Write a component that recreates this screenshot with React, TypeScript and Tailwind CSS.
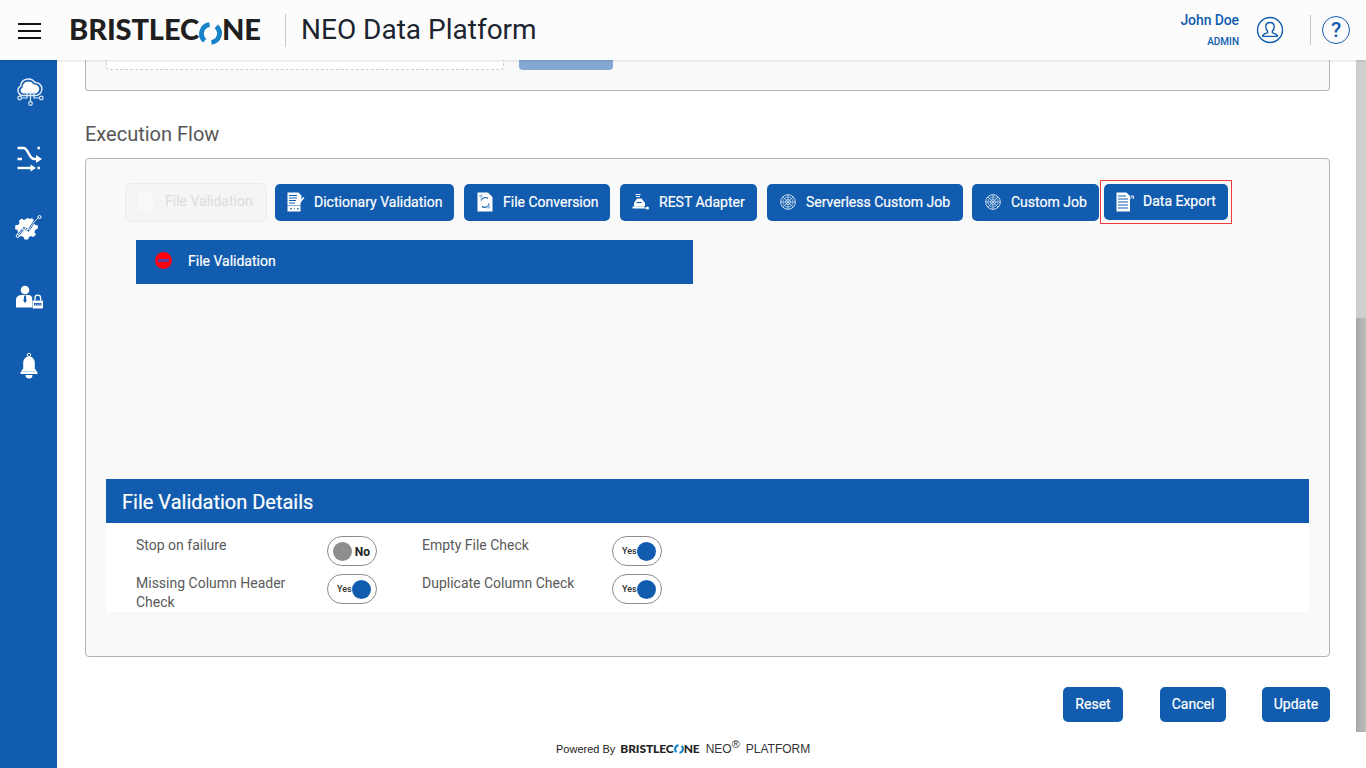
import React from "react";

const roboto = "font-['Roboto',sans-serif]";

function LogoO({ size }: { size: number }) {
  return (
    <svg width={size} height={size} viewBox="0 0 24 24" className="inline-block shrink-0" fill="none">
      <path d="M11 2.800A9.500 9.500 0 0 0 6 19.500" stroke="#1683c9" strokeWidth="5" />
      <path d="M13 21.200A9.500 9.500 0 0 0 18 4.500" stroke="#1683c9" strokeWidth="5" />
    </svg>
  );
}

function Logo() {
  return (
    <div className="ml-[-1px] flex items-center text-[#1f1f1f] font-['Lato',sans-serif] font-black text-[29px] leading-none tracking-[-0.1px] w-[193px] pb-[3px]">
      <span>BRISTLEC</span>
      <span className="pt-[2px]"><LogoO size={23} /></span>
      <span>NE</span>
    </div>
  );
}

function CloudIcon() {
  return (
    <svg width="30" height="30" viewBox="0 0 30 30" fill="none" stroke="#dfe9f5" strokeWidth="1.200">
      <path d="M9 19.500a5 5 0 0 1-2.500-9.300A8 8 0 0 1 21 6.500a6.500 6.500 0 0 1 .8 13z" strokeWidth="1.500" />
      <path d="M9.500 17.500a3 3 0 0 1-1-5.800A6 6 0 0 1 19.700 8.500a4.500 4.500 0 0 1 1.800 9z" fill="#fff" stroke="none" />
      <path d="M16.500 15v10.500M13 15v7H7.500M20 15v7h5.500" />
      <circle cx="5.700" cy="22" r="1.800" />
      <circle cx="27.300" cy="22" r="1.800" />
      <circle cx="16.500" cy="27.500" r="1.800" />
    </svg>
  );
}

function ShuffleIcon() {
  return (
    <svg width="28" height="26" viewBox="0 0 28 26" fill="none" stroke="#fff" strokeWidth="2.400">
      <path d="M2.500 2h6c5 0 5 11 11 11h3" />
      <path d="M21 9l6 4-6 4z" fill="#fff" stroke="none" />
      <path d="M2.500 22h14" />
      <path d="M15.500 18.500l5.500 3.500-5.500 3.500z" fill="#fff" stroke="none" />
      <path d="M2.500 13h4.500M22.500 2h2.400M22.500 22h2.400" />
    </svg>
  );
}

function GearIcon() {
  return (
    <svg width="28" height="28" viewBox="0 0 28 28" fill="none">
      <path d="M12 4l3.500 1 1.500-1 2 2.500-.5 2.500 2 2 2.500.5-.5 3.500-2.500 1-.5 2.500 1.500 2-2.500 2.500-2.500-1-2 1-1 2.500h-3.500l-1-2.500-2.500-1-2.500 1-2-2.500 1.500-2-.5-2.500-2.500-1 .5-4 2.500 0 1.500-2-.5-2.500 3-2 1.500 1.500 2-.5z" fill="#fff" />
      <path d="M2.500 22L9 14l4.500 2.500L19 8l5-5" stroke="#1a5fae" strokeWidth="2.200" />
      <path d="M2.500 22L9 14l4.500 2.500L19 8l5-5" stroke="#dfe9f5" strokeWidth="0.900" />
      <circle cx="2.700" cy="22" r="1.500" fill="#1a5fae" stroke="#fff" />
      <circle cx="9" cy="14" r="1.500" fill="#1a5fae" stroke="#fff" />
      <circle cx="13.500" cy="16.500" r="1.500" fill="#1a5fae" stroke="#fff" />
      <circle cx="24.500" cy="3" r="1.500" fill="#1a5fae" stroke="#fff" />
    </svg>
  );
}

function UserLockIcon() {
  return (
    <svg width="28" height="26" viewBox="0 0 28 26" fill="none">
      <circle cx="10" cy="5" r="4.300" fill="#fff" />
      <path d="M1 22.500v-8c0-2.500 2-4 5-4.500h8c2 .5 3 1.500 3.200 3v9.500z" fill="#fff" />
      <path d="M9.200 10.500h1.600l.7 5.500-1.500 2-1.500-2z" fill="#115cae" />
      <rect x="17.500" y="15.500" width="10.500" height="8" rx="0.800" fill="#fff" />
      <path d="M20 15.500v-2.500a2.800 2.800 0 0 1 5.600 0v2.500" stroke="#fff" strokeWidth="1.300" />
      <rect x="19" y="18" width="7.500" height="2.400" fill="#115cae" />
      <path d="M20 19.200h1M22.300 19.200h1M24.500 19.200h1" stroke="#fff" strokeWidth="0.900" />
    </svg>
  );
}

function BellIcon() {
  return (
    <svg width="20" height="28" viewBox="0 0 20 28" fill="none">
      <circle cx="10" cy="3" r="1.700" stroke="#fff" strokeWidth="1" />
      <path d="M10 4.500c-3.800 0-5.800 3-5.800 6.500v5.500L1.500 20.500v1.500h17v-1.500l-2.700-4V11c0-3.500-2-6.500-5.800-6.500z" fill="#fff" />
      <path d="M3 19.500h14" stroke="#c9d9ee" strokeWidth="1.200" />
      <path d="M6.500 23h7a3.500 3.500 0 0 1-7 0z" fill="#fff" />
    </svg>
  );
}

function FormIcon() {
  return (
    <svg width="18" height="20" viewBox="0 0 18 20" fill="none">
      <path d="M0.500 0.500h11l3 3v6l-1 1v3h-13z" fill="#fff" />
      <path d="M2 3.500h8M2 6h8M2 8.500h7M2 11h6" stroke="#115cae" strokeWidth="1" />
      <path d="M10.500 8.500l2 2 4.500-5" stroke="#fff" strokeWidth="1.300" />
      <rect x="0.500" y="14" width="13" height="5.500" fill="#fff" />
      <path d="M3 16.800h2M7 16.800h1M10 16.800h2" stroke="#115cae" strokeWidth="1" />
    </svg>
  );
}

function ConvertIcon() {
  return (
    <svg width="16" height="20" viewBox="0 0 16 20" fill="none">
      <path d="M0.500 0.500h10.500l4.500 4.500v14.500h-15z" fill="#fff" />
      <path d="M4 8.500a4.500 4.500 0 0 1 7-2M12 11.500a4.500 4.500 0 0 1-7 3" stroke="#115cae" strokeWidth="1.100" />
      <rect x="2.500" y="2.500" width="3" height="3" fill="#9fbfe2" />
      <rect x="10" y="13" width="3" height="3.500" fill="#9fbfe2" />
    </svg>
  );
}

function RestIcon() {
  return (
    <svg width="18" height="18" viewBox="0 0 18 18" fill="none">
      <path d="M3.500 1.500h5M4 3.500h4" stroke="#fff" strokeWidth="1" />
      <path d="M2 10l3-4.500h4.500L13 10v3.500H2z" fill="#fff" />
      <path d="M4.500 9.500h5" stroke="#115cae" strokeWidth="1.200" />
      <path d="M0.500 14.500h11.500" stroke="#fff" strokeWidth="2" />
      <path d="M12 15h2.500" stroke="#fff" strokeWidth="1" />
      <circle cx="15.500" cy="15" r="1.500" fill="#fff" />
    </svg>
  );
}

function JobIcon() {
  return (
    <svg width="16" height="16" viewBox="0 0 16 16" fill="none" stroke="#d5e2f2" strokeWidth="0.700">
      <circle cx="8" cy="8" r="7.300" strokeWidth="1" />
      <circle cx="8" cy="8" r="5" />
      <circle cx="8" cy="8" r="2.600" />
      <path d="M8 .7v14.600M.7 8h14.600M2.800 2.800l10.400 10.400M13.200 2.800L2.800 13.200" />
    </svg>
  );
}

function ExportIcon() {
  return (
    <svg width="18" height="20" viewBox="0 0 18 20" fill="none">
      <path d="M0.500 0.500h10l3.500 3.500v15.500h-13.500z" fill="#fff" />
      <path d="M2 4h8M2 7h10M2 10h10M2 13h10M2 16h10" stroke="#115cae" strokeWidth="1" />
      <path d="M13 7.500l4-3M14.500 4h3v3" stroke="#dfe9f5" strokeWidth="1" />
    </svg>
  );
}

function ActionButton({ icon, label, width }: { icon: React.ReactNode; label: string; width: string }) {
  return (
    <button className={`h-[37px] ${width} shrink-0 rounded-[5px] bg-[#115cae] text-white text-sm font-normal [-webkit-text-stroke:0.2px_white] flex items-center pl-[12px] gap-[9px]`}>
      <span className="w-[18px] flex justify-center">{icon}</span>
      <span className="whitespace-nowrap">{label}</span>
    </button>
  );
}

function Toggle({ on }: { on: boolean }) {
  return (
    <div className="w-[50px] h-[30px] shrink-0 rounded-full border border-[#8c8c8c] bg-white flex items-center justify-between px-[5px]">
      {on ? (
        <>
          <span className="text-[9px] font-medium text-[#333] pl-[4px] pt-[2px]">Yes</span>
          <span className="w-[19px] h-[19px] rounded-full bg-[#115cae]" />
        </>
      ) : (
        <>
          <span className="w-[19px] h-[19px] rounded-full bg-[#8e8e8e]" />
          <span className="text-xs font-bold text-[#222] pr-[1px] pt-[1px]">No</span>
        </>
      )}
    </div>
  );
}

function Field({ label, on, width }: { label: string; on: boolean; width: string }) {
  return (
    <div className={`flex items-start ${width}`}>
      <span className="flex-1 text-sm leading-[19px] text-[#5a5a5a]">{label}</span>
      <Toggle on={on} />
    </div>
  );
}

function FooterButton({ label, width }: { label: string; width: string }) {
  return (
    <button className={`${width} h-[35px] rounded-[5px] bg-[#115cae] text-white text-sm font-normal [-webkit-text-stroke:0.2px_white] pb-[1px]`}>{label}</button>
  );
}

export default function App() {
  return (
    <div className={`w-[1366px] h-[768px] overflow-hidden flex flex-col bg-white ${roboto}`}>
      <header className="h-[60px] shrink-0 bg-[#fcfcfc] shadow-[0_1px_2px_rgba(0,0,0,0.12)] relative z-10 flex items-center">
        <div className="w-[70px] pl-[18px] flex flex-col gap-[5px] shrink-0 pt-[1px]">
          <span className="block w-[23px] h-[2px] bg-[#111]" />
          <span className="block w-[23px] h-[2px] bg-[#111]" />
          <span className="block w-[23px] h-[2px] bg-[#111]" />
        </div>
        <Logo />
        <span className="ml-[23px] w-px h-[33px] bg-[#c8c8c8]" />
        <span className="ml-[15px] text-[28px] text-[#1c2430] leading-none">NEO Data Platform</span>
        <div className="ml-auto flex items-center">
          <div className="text-right text-[#115cae] mr-[17px]">
            <div className="text-sm font-medium leading-[16px] tracking-[-0.1px] mt-[-1px]">John Doe</div>
            <div className="text-[10px] font-medium leading-[12px] mt-[8px]">ADMIN</div>
          </div>
          <svg width="28" height="28" viewBox="0 0 28 28" fill="none" stroke="#115cae" strokeWidth="1.400">
            <circle cx="14" cy="14" r="12.500" />
            <path d="M14 6.500c-2.800 0-4.200 2-4.200 4.400 0 1.800.8 3.300 1.800 4.200v1.600c-1.800.7-4.200 1.300-4.800 2.700v1h14.400v-1c-.6-1.400-3-2-4.800-2.700v-1.600c1-.9 1.800-2.400 1.800-4.200 0-2.400-1.400-4.400-4.200-4.400z" />
          </svg>
          <span className="ml-[26px] w-px h-[30px] bg-[#c8c8c8]" />
          <div className="ml-[11px] mr-[16px] w-[28px] h-[28px] rounded-full border-[1.5px] border-[#115cae] flex items-center justify-center text-[#115cae] text-[21px] font-medium leading-none">?</div>
        </div>
      </header>

      <div className="flex-1 flex min-h-0">
        <aside className="w-[57px] shrink-0 bg-[#115cae] flex flex-col items-center pt-[16px]">
          <div className="h-[30px] flex items-center justify-center"><CloudIcon /></div>
          <div className="h-[26px] mt-[40px] flex items-center justify-center"><ShuffleIcon /></div>
          <div className="h-[28px] mt-[42px] flex items-center justify-center"><GearIcon /></div>
          <div className="h-[26px] mt-[43px] flex items-center justify-center"><UserLockIcon /></div>
          <div className="h-[28px] mt-[41px] flex items-center justify-center"><BellIcon /></div>
        </aside>

        <main className="flex-1 min-w-0 flex flex-col pl-[28px] pr-[26px]">
          <section className="h-[31px] shrink-0 bg-[#f9f9f9] border-x border-b border-[#b4b4b4] rounded-b-[4px] flex items-start pl-[20px]">
            <div className="w-[398px] h-[10px] bg-white border-x border-b border-dashed border-[#cfcfcf] rounded-b-[4px]" />
            <div className="ml-[15px] w-[94px] h-[10px] bg-[#85a8d3] rounded-b-[4px]" />
          </section>

          <h2 className="mt-[31px] text-xl leading-[24px] text-[#565656] font-normal">Execution Flow</h2>

          <section className="mt-[12px] h-[499px] shrink-0 bg-[#f9f9f9] border border-[#b4b4b4] rounded-[4px] flex flex-col pl-[20px] pr-[20px]">
            <div className="flex items-center pt-[21px] pl-[19px]">
              <button className="h-[39px] w-[142px] shrink-0 rounded-[6px] border border-[#ececec] bg-[#f5f5f5] text-[#dcdcdc] text-sm flex items-center pl-[12px] gap-[12px] pb-[2px]">
                <span className="w-[15px] h-[17px] bg-[#f9f9f9]" />
                <span className="whitespace-nowrap">File Validation</span>
              </button>
              <div className="ml-[8px]"><ActionButton icon={<FormIcon />} label="Dictionary Validation" width="w-[179px]" /></div>
              <div className="ml-[10px]"><ActionButton icon={<ConvertIcon />} label="File Conversion" width="w-[146px]" /></div>
              <div className="ml-[10px]"><ActionButton icon={<RestIcon />} label="REST Adapter" width="w-[137px]" /></div>
              <div className="ml-[10px]"><ActionButton icon={<JobIcon />} label="Serverless Custom Job" width="w-[196px]" /></div>
              <div className="ml-[9px]"><ActionButton icon={<JobIcon />} label="Custom Job" width="w-[127px]" /></div>
              <div className="ml-[1px] border border-[#f03a3a] p-[3px] h-[44px] flex items-center">
                <button className="h-[36px] w-[124px] rounded-[5px] bg-[#115cae] text-white text-sm font-normal [-webkit-text-stroke:0.2px_white] flex items-center pl-[11px] gap-[8px]">
                  <span className="w-[20px] flex justify-center"><ExportIcon /></span>
                  <span className="whitespace-nowrap pb-[2px]">Data Export</span>
                </button>
              </div>
            </div>

            <div className="mt-[16px] ml-[30px] w-[557px] h-[44px] shrink-0 bg-[#115cae] flex items-center pl-[19px] text-white text-sm font-normal [-webkit-text-stroke:0.2px_white] pb-[4px]">
              <span className="w-[17px] h-[17px] rounded-full bg-[#ff0010] flex items-center justify-center mr-[16px]">
                <span className="w-[11px] h-[3px] bg-[#5a3f9f]" />
              </span>
              <span className="pt-[2px]">File Validation</span>
            </div>

            <div className="mt-[195px] h-[44px] shrink-0 bg-[#115cae] flex items-center pl-[16px] pt-[2px] text-white text-xl [-webkit-text-stroke:0.2px_white]">File Validation Details</div>
            <div className="h-[89px] shrink-0 bg-white pl-[30px] pt-[13px]">
              <div className="flex gap-[45px]">
                <Field label="Stop on failure" on={false} width="w-[241px]" />
                <Field label="Empty File Check" on={true} width="w-[240px]" />
              </div>
              <div className="flex gap-[45px] mt-[8px]">
                <Field label="Missing Column Header Check" on={true} width="w-[241px]" />
                <Field label="Duplicate Column Check" on={true} width="w-[240px]" />
              </div>
            </div>
          </section>

          <div className="mt-[30px] flex justify-end">
            <FooterButton label="Reset" width="w-[60px]" />
            <div className="ml-[37px]"><FooterButton label="Cancel" width="w-[66px]" /></div>
            <div className="ml-[36px]"><FooterButton label="Update" width="w-[68px]" /></div>
          </div>

          <div className="mt-[18px] flex items-center pl-[471px] text-[#222] font-['Liberation_Sans',sans-serif]">
            <span className="text-[11px] mr-[5px]">Powered By</span>
            <span className="flex items-center font-['Lato',sans-serif] font-black text-[12px] tracking-[-0.1px] text-[#222]">
              BRISTLEC<LogoO size={10} />NE
            </span>
            <span className="ml-[6px] text-xs text-[#333]">NEO<sup className="text-[11px]">®</sup></span>
            <span className="ml-[6px] text-xs text-[#333]">PLATFORM</span>
          </div>
        </main>

        <div className="w-[10px] shrink-0 flex flex-col">
          <div className="h-[258px] bg-[#cfcfcf]" />
          <div className="h-[414px] bg-gradient-to-r from-[#a8a8a8] to-[#bdbdbd]" />
        </div>
      </div>
    </div>
  );
}
